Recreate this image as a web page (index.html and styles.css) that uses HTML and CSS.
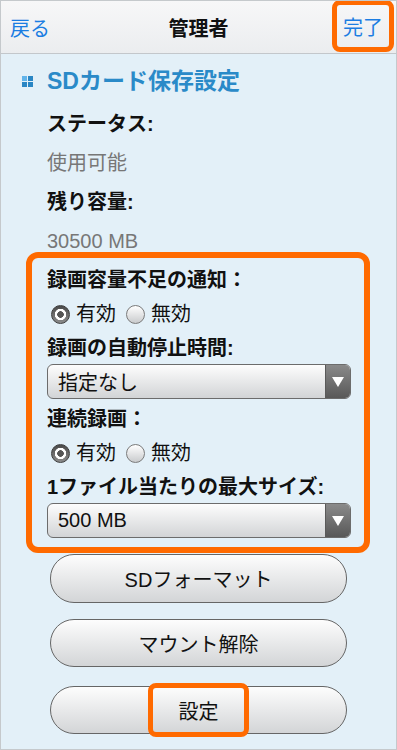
FILE: index.html
```html
<!DOCTYPE html>
<html lang="ja">
<head>
<meta charset="utf-8">
<title>管理者</title>
<link rel="stylesheet" href="styles.css">
</head>
<body>
<div class="screen">
  <header class="topbar">
    <span class="nav-back">戻る</span>
    <span class="nav-title">管理者</span>
    <span class="nav-done">完了</span>
  </header>

  <main class="content">
    <h1 class="section-title"><span class="grid-icon"><i></i><i></i><i></i><i></i></span>SDカード保存設定</h1>
    <div class="info">
      <p class="label">ステータス:</p>
      <p class="value">使用可能</p>
      <p class="label">残り容量:</p>
      <p class="value">30500 MB</p>
    </div>

    <div class="options">
      <p class="label">録画容量不足の通知：</p>
      <div class="radios">
        <span class="radio checked"></span><span class="radio-text">有効</span>
        <span class="radio"></span><span class="radio-text">無効</span>
      </div>
      <p class="label">録画の自動停止時間:</p>
      <div class="select"><span class="select-text">指定なし</span><span class="select-arrow"><i></i></span></div>
      <p class="label">連続録画：</p>
      <div class="radios">
        <span class="radio checked"></span><span class="radio-text">有効</span>
        <span class="radio"></span><span class="radio-text">無効</span>
      </div>
      <p class="label">1ファイル当たりの最大サイズ:</p>
      <div class="select last"><span class="select-text">500 MB</span><span class="select-arrow"><i></i></span></div>
    </div>

    <div class="actions">
      <div class="btn btn-first">SDフォーマット</div>
      <div class="btn btn-second">マウント解除</div>
      <div class="btn btn-third"><span class="mark">設定</span></div>
    </div>
  </main>
</div>
</body>
</html>
```

FILE: styles.css
```css
* {
  box-sizing: border-box;
  margin: 0;
  padding: 0;
}

body {
  margin: 0;
  font-family: "Liberation Sans", "Noto Sans CJK JP", sans-serif;
  color: #111;
  background: #fff;
}

.screen {
  width: 397px;
  height: 750px;
  border: 1px solid #c5c9cc;
  background: #e3f0f8;
  display: flex;
  flex-direction: column;
  overflow: hidden;
}

/* header */
.topbar {
  flex: none;
  height: 53px;
  display: grid;
  grid-template-columns: 1fr auto 1fr;
  align-items: center;
  background: linear-gradient(#f7f7f8, #ebedef);
  border-bottom: 1px solid #c3c7cb;
}

.nav-back {
  justify-self: start;
  padding-left: 9px;
  font-size: 20px;
  color: #1b7de2;
}

.nav-title {
  font-size: 20px;
  font-weight: bold;
  color: #111;
}

.nav-done {
  justify-self: end;
  align-self: start;
  margin-top: -1px;
  margin-right: 2px;
  height: 52px;
  padding: 0 6px;
  border: 5px solid #ff6a00;
  border-radius: 8px;
  display: flex;
  align-items: center;
  font-size: 20px;
  color: #1b7de2;
}

/* content */
.content {
  flex: 1;
  display: flex;
  flex-direction: column;
}

.section-title {
  margin-top: 12px;
  height: 30px;
  display: flex;
  align-items: center;
  padding-left: 21px;
  font-size: 23px;
  line-height: 30px;
  font-weight: bold;
  color: #2a8ac8;
}

.grid-icon {
  flex: none;
  width: 11px;
  height: 11px;
  margin-right: 14px;
  display: grid;
  grid-template-columns: 5px 5px;
  grid-template-rows: 5px 5px;
  gap: 1px;
}

.grid-icon i {
  background: #2a86c4;
}

.grid-icon i:first-child {
  background: #62b4ea;
}

.info {
  display: flex;
  flex-direction: column;
  gap: 17px;
  margin-top: 17px;
  padding-left: 46px;
}

.label {
  font-size: 20px;
  line-height: 22px;
  font-weight: bold;
  color: #111;
}

.value {
  font-size: 20px;
  line-height: 22px;
  color: #777;
}

/* highlighted options box */
.options {
  margin-left: 25px;
  width: 344px;
  border: 6px solid #ff6a00;
  border-radius: 12px;
  padding: 11px 13px 9px 15px;
  display: flex;
  flex-direction: column;
}

.radios {
  margin: 12px 0;
  height: 22px;
  display: flex;
  align-items: center;
  padding-left: 4px;
}

.radio {
  width: 19px;
  height: 19px;
  border-radius: 50%;
  border: 1px solid #7a7a7a;
  background: linear-gradient(#ffffff, #c9cbcd);
  margin-right: 6px;
}

.radio.checked {
  border-color: #3d3d3d;
  background:
    radial-gradient(circle, #555 0 3px, #fff 3.6px 5.4px, rgba(255,255,255,0) 6px),
    linear-gradient(#4a4a4a, #8c8c8c);
}

.radio-text {
  font-size: 20px;
  line-height: 22px;
  color: #111;
  margin-right: 10px;
}

.select {
  margin: 5px 0 9px;
  height: 35px;
  border: 1px solid #6c6c6c;
  border-radius: 6px;
  background: linear-gradient(#fdfdfd, #d2d4d6);
  display: flex;
  overflow: hidden;
}

.select.last {
  margin-bottom: 0;
}

.select-text {
  flex: 1;
  display: flex;
  align-items: center;
  padding-left: 10px;
  font-size: 20px;
  color: #111;
}

.select-arrow {
  width: 25px;
  border-left: 1px solid #5a5a5a;
  background: linear-gradient(#8a8a8a, #585858);
  display: flex;
  align-items: center;
  justify-content: center;
}

.select-arrow i {
  width: 0;
  height: 0;
  border-left: 6px solid transparent;
  border-right: 6px solid transparent;
  border-top: 10px solid #fff;
}

/* buttons */
.actions {
  display: flex;
  flex-direction: column;
  padding-left: 49px;
}

.btn {
  width: 297px;
  height: 48px;
  border: 1px solid #666;
  border-radius: 24px;
  background: linear-gradient(#fdfdfd, #d3d5d7);
  display: flex;
  align-items: center;
  justify-content: center;
  font-size: 20px;
  color: #111;
}

.btn-first {
  margin-top: 1px;
  height: 49px;
}

.btn-second {
  margin-top: 16px;
}

.btn-third {
  margin-top: 19px;
}

.mark {
  flex: none;
  width: 101px;
  height: 54px;
  border: 5px solid #ff6a00;
  border-radius: 8px;
  display: flex;
  align-items: center;
  justify-content: center;
}
```
